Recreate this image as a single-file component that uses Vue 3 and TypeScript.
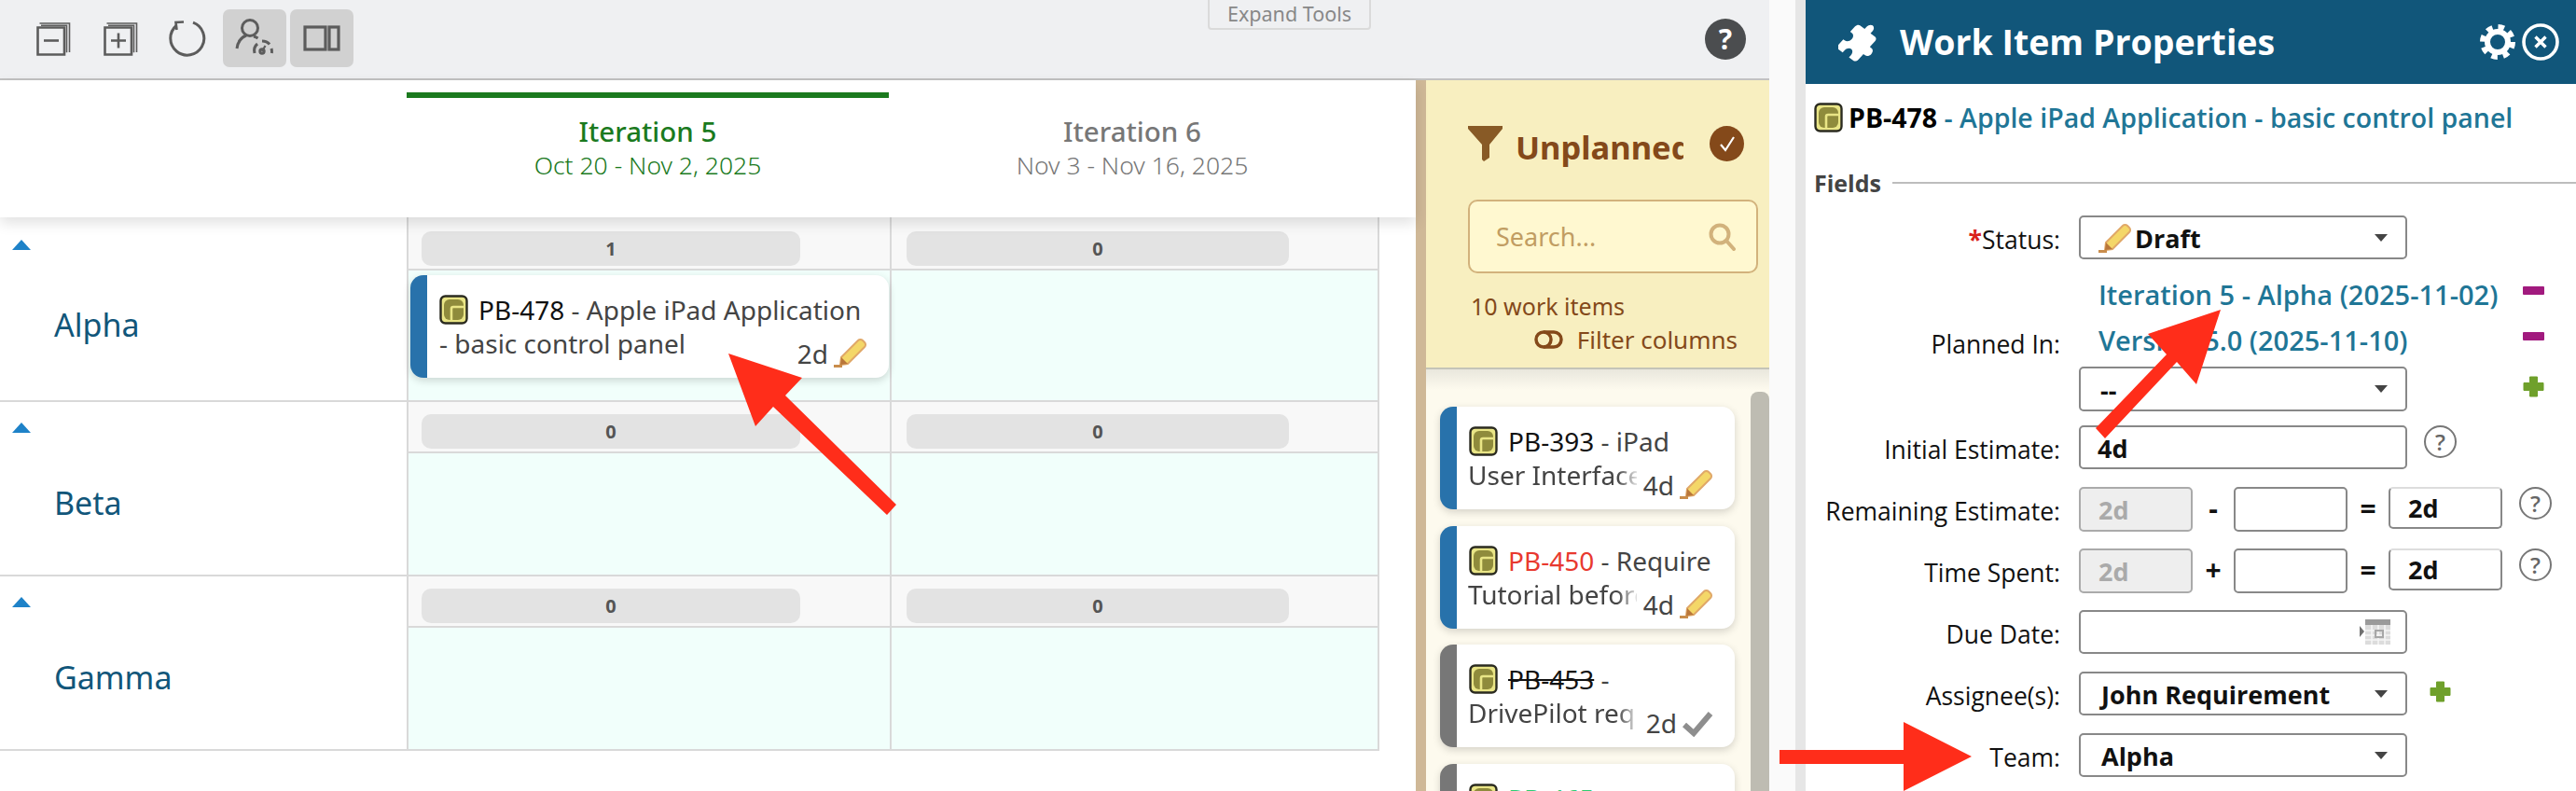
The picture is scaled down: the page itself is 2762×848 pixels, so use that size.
<script setup lang="ts">
interface Row { name: string; first?: boolean; counts: number[]; }
const rows: Row[] = [
  { name: 'Alpha', first: true, counts: [1, 0] },
  { name: 'Beta', counts: [0, 0] },
  { name: 'Gamma', counts: [0, 0] },
];
interface Item { id: string; tail: string; line2: string; est: string; state: string; idClass?: string; stripe: string; }
const items: Item[] = [
  { id: 'PB-393', tail: ' - iPad', line2: 'User Interface', est: '4d', state: 'draft', stripe: 'blue' },
  { id: 'PB-450', tail: ' - Require', line2: 'Tutorial before', est: '4d', state: 'draft', idClass: 'red', stripe: 'blue' },
  { id: 'PB-453', tail: ' -', line2: 'DrivePilot requ', est: '2d', state: 'done', idClass: 'strike', stripe: 'grey' },
  { id: 'PB-465', tail: ' -', line2: '', est: '', state: '', idClass: 'green', stripe: 'grey' },
];
</script>

<template>
  <div class="page">
    <svg class="defs" width="0" height="0" aria-hidden="true">
      <symbol id="wi" viewBox="0 0 31 32">
        <rect x="1.5" y="1.5" width="28" height="29" rx="5" fill="#e9e586" stroke="#2b2b20" stroke-width="2.4" />
        <rect x="5" y="5" width="21" height="22" rx="6" fill="#8f8b3c" />
        <path d="M26 13H15a2 2 0 0 0-2 2v12" fill="none" stroke="#e9e586" stroke-width="2.6" />
      </symbol>
      <symbol id="pencil" viewBox="0 0 37 32">
        <path d="M9 21 27 3a3.5 3.5 0 0 1 5 0l2 2a3.5 3.5 0 0 1 0 5L16 28l-8 1z" fill="#f4d768" stroke="#e0a868" stroke-width="2" />
        <path d="M9 21l7 7-8 1z" fill="#b9763a" />
        <path d="M1 30.5h9" stroke="#c98d4c" stroke-width="3" />
      </symbol>
      <symbol id="minusbox" viewBox="0 0 37 37">
        <path d="M1.5 6.5h28.5v29H1.5z" fill="none" stroke="#5c5c5c" stroke-width="2.6" />
        <path d="M3.5 2h32v31M5 4.3h27.500v29" fill="none" stroke="#5c5c5c" stroke-width="1.600" />
      </symbol>
    </svg>

    <section class="main">
      <header class="toolbar">
        <button class="tool">
          <svg width="37" height="37"><use href="#minusbox" /><path d="M8 20.500h16" stroke="#5c5c5c" stroke-width="2.600" /></svg>
        </button>
        <button class="tool">
          <svg width="37" height="37"><use href="#minusbox" /><path d="M8 20.500h16M16 12.500v16" stroke="#5c5c5c" stroke-width="2.600" /></svg>
        </button>
        <button class="tool">
          <svg width="40" height="40" viewBox="0 0 40 40" fill="none" stroke="#5c5c5c" stroke-width="3">
            <path d="M26 3.200A18 18 0 1 1 8 6.500" />
            <path d="M16 2.500 7.500 3l1 8" stroke-width="2.600" />
          </svg>
        </button>
        <button class="tool on">
          <svg width="46" height="44" viewBox="0 0 46 44" fill="none" stroke="#5c5c5c" stroke-width="3">
            <circle cx="18" cy="11" r="8.500" />
            <path d="M4 33c1-8 5-12 10-14M22 20c2 .6 3 1 4.500 2" />
            <path d="M23 38c-1-4 .5-8 3-10M31 25c3 0 6 1 8 3.500M41 33c.6 2 .6 3.500.4 5" />
            <circle cx="31" cy="36" r="2.200" />
            <path d="M31 36l3.500-6" stroke-width="2.200" />
          </svg>
        </button>
        <button class="tool on">
          <svg width="40" height="28" viewBox="0 0 40 28" fill="none" stroke="#5c5c5c" stroke-width="3.200">
            <rect x="2" y="2" width="22" height="24" />
            <rect x="28" y="2" width="10" height="24" />
          </svg>
        </button>
        <div class="expand">Expand Tools</div>
        <div class="helpdark">?</div>
      </header>

      <div class="workspace">
        <div class="board">
          <div class="boardhead">
            <div class="itercol active">
              <div class="itername">Iteration 5</div>
              <div class="iterdate">Oct 20 - Nov 2, 2025</div>
            </div>
            <div class="itercol">
              <div class="itername">Iteration 6</div>
              <div class="iterdate">Nov 3 - Nov 16, 2025</div>
            </div>
          </div>
          <div class="lane" v-for="r in rows" :key="r.name" :class="{ first: r.first }">
            <div class="lanehead">
              <span class="tri"></span>
              <div class="lanename">{{ r.name }}</div>
            </div>
            <div class="cell" v-for="(c, i) in r.counts" :key="i" :class="{ last: i === 1 }">
              <div class="strip"><div class="pill" :class="{ last: i === 1 }">{{ c }}</div></div>
              <div class="cellbody">
                <div class="card wide" v-if="r.first && i === 0">
                  <div class="cline">
                    <svg class="wi" width="31" height="32"><use href="#wi" /></svg><span class="id">PB-478</span><span> - Apple iPad Application</span>
                  </div>
                  <div class="cline">- basic control panel</div>
                  <div class="est">2d<svg width="37" height="32"><use href="#pencil" /></svg></div>
                </div>
              </div>
            </div>
          </div>
        </div>

        <aside class="unplanned">
          <div class="uphead">
            <div class="uptitle">
              <svg width="37" height="38" viewBox="0 0 37 38"><path d="M0 0h37v3L23 20v14l-6 4-2-2V20L0 3z" fill="#885a26" /></svg>
              <div class="uptext">Unplanned</div>
              <div class="upcheck">
                <svg width="20" height="20" viewBox="0 0 20 20" fill="none" stroke="#fff" stroke-width="2.200"><path d="M3 11l5 6 9-14" /></svg>
              </div>
            </div>
            <div class="search">
              <span>Search...</span>
              <svg width="29" height="30" viewBox="0 0 29 30" fill="none" stroke="#d2b27c" stroke-width="4"><circle cx="12" cy="12" r="9.500" /><path d="M19 19l8 9" stroke-linecap="round" /></svg>
            </div>
            <div class="count">10 work items</div>
            <div class="filter">
              <svg width="31" height="20" viewBox="0 0 31 20" fill="none" stroke="#84491a" stroke-width="3.500"><circle cx="10" cy="10" r="8" /><path d="M10 2h11a8 8 0 0 1 0 16H10" /></svg>
              <span>Filter columns</span>
            </div>
          </div>
          <div class="uplist">
            <div class="upcards">
              <div class="card narrow" v-for="it in items" :key="it.id" :class="it.stripe">
                <div class="cline">
                  <svg class="wi" width="31" height="32"><use href="#wi" /></svg><span class="id" :class="it.idClass">{{ it.id }}</span><span>{{ it.tail }}</span>
                </div>
                <div class="cline faded">{{ it.line2 }}</div>
                <div class="est" v-if="it.est">
                  {{ it.est }}
                  <svg v-if="it.state === 'draft'" width="37" height="32"><use href="#pencil" /></svg>
                  <svg v-else width="34" height="28" viewBox="0 0 34 28" fill="none" stroke="#8e8e8e" stroke-width="6"><path d="M3 15l10 9L31 3" /></svg>
                </div>
              </div>
            </div>
            <div class="scroll"></div>
          </div>
        </aside>
      </div>
    </section>

    <div class="gap"></div>

    <section class="props">
      <header class="prophead">
        <svg width="50" height="44" viewBox="0 0 50 44" fill="#fff">
          <path transform="translate(25 22) rotate(-40) scale(2.050 1.550) rotate(80) translate(-12.500 -11.500)" d="M20.500 11H19V7c0-1.100-.900-2-2-2h-4V3.500C13 2.120 11.880 1 10.500 1S8 2.120 8 3.500V5H4c-1.100 0-1.990.900-1.990 2v3.800H3.500c1.490 0 2.700 1.210 2.700 2.700s-1.210 2.700-2.700 2.700H2V20c0 1.100.900 2 2 2h3.800v-1.500c0-1.490 1.210-2.700 2.700-2.700 1.490 0 2.700 1.210 2.700 2.700V22H17c1.100 0 2-.900 2-2v-4h1.500c1.380 0 2.500-1.120 2.500-2.500S21.880 11 20.500 11z" />
        </svg>
        <h1>Work Item Properties</h1>
        <div class="headicons">
          <svg width="38" height="40" viewBox="0 0 38 40" fill="none" stroke="#fff">
            <circle cx="19" cy="20" r="11" stroke-width="6" />
            <circle cx="19" cy="20" r="16" stroke-width="6" stroke-dasharray="6.500 6.070" />
          </svg>
          <svg width="40" height="40" viewBox="0 0 40 40" fill="none" stroke="#fff">
            <circle cx="20" cy="20" r="18" stroke-width="3.600" />
            <path d="M14.500 14.500l11 11M25.500 14.500l-11 11" stroke-width="3.400" />
          </svg>
        </div>
      </header>

      <div class="propbody">
        <div class="proptitle">
          <svg width="31" height="32"><use href="#wi" /></svg>
          <b>PB-478</b><span class="linkb">&nbsp;- Apple iPad Application - basic control panel</span>
        </div>
        <div class="legend"><b>Fields</b><span class="legendline"></span></div>

        <div class="frow">
          <label class="flabel"><em>*</em>Status:</label>
          <div class="box sel">
            <svg width="37" height="32"><use href="#pencil" /></svg><b>Draft</b><i class="caret"></i>
          </div>
        </div>

        <div class="frow planned">
          <label class="flabel">Planned In:</label>
          <div class="plannedcol">
            <div class="plink"><a>Iteration 5 - Alpha (2025-11-02)</a><span class="minus"></span></div>
            <div class="plink"><a>Version 5.0 (2025-11-10)</a><span class="minus"></span></div>
            <div class="selrow">
              <div class="box sel"><b>--</b><i class="caret"></i></div>
              <svg class="plusa" width="23" height="23" viewBox="0 0 23 23"><path d="M7.500 1h8v6.500H22v8h-6.500V22h-8v-6.500H1v-8h6.500z" fill="#6fa02b" stroke="#6fa02b" stroke-linejoin="round" /></svg>
            </div>
          </div>
        </div>

        <div class="frow t15">
          <label class="flabel">Initial Estimate:</label>
          <div class="box sel text"><b>4d</b></div>
          <span class="q q1">?</span>
        </div>

        <div class="frow tall">
          <label class="flabel">Remaining Estimate:</label>
          <div class="box num dis">2d</div>
          <span class="op">-</span>
          <div class="box num"></div>
          <span class="op eq">=</span>
          <div class="box num res"><b>2d</b></div>
          <span class="q q2">?</span>
        </div>

        <div class="frow tall t18">
          <label class="flabel">Time Spent:</label>
          <div class="box num dis">2d</div>
          <span class="op">+</span>
          <div class="box num"></div>
          <span class="op eq">=</span>
          <div class="box num res"><b>2d</b></div>
          <span class="q q2">?</span>
        </div>

        <div class="frow t18">
          <label class="flabel">Due Date:</label>
          <div class="box sel cal">
            <svg width="34" height="27" viewBox="0 0 34 27">
              <path d="M0 7l5 6-5 6z" fill="#707070" />
              <rect x="6" y="0" width="27" height="6" fill="#9a9a9a" />
              <rect x="6" y="6" width="27" height="21" fill="#dcdcdc" />
              <path d="M6 12h27M6 17h27M6 22h27M13 6v21M20 6v21M27 6v21" stroke="#f5f5f5" stroke-width="1.600" />
              <rect x="17" y="12" width="8" height="7" fill="none" stroke="#a8a8a8" stroke-width="2" />
            </svg>
          </div>
        </div>

        <div class="frow">
          <label class="flabel">Assignee(s):</label>
          <div class="box sel pl"><b>John Requirement</b><i class="caret"></i></div>
          <svg class="plusb" width="23" height="23" viewBox="0 0 23 23"><path d="M7.500 1h8v6.500H22v8h-6.500V22h-8v-6.500H1v-8h6.500z" fill="#6fa02b" stroke="#6fa02b" stroke-linejoin="round" /></svg>
        </div>

        <div class="frow">
          <label class="flabel">Team:</label>
          <div class="box sel pl"><b>Alpha</b><i class="caret"></i></div>
        </div>
      </div>
    </section>

    <svg class="arrows" width="2762" height="848" viewBox="0 0 2762 848" fill="#ff2d1a">
      <path d="M781 379l79 26-18 19 119 117-10 11-122-116-19 21z" />
      <path d="M2381 332l-78 26 20 22-76 79 10 11 77-82 21 24z" />
      <path d="M1908 804h133v-30l73 37-73 37v-29h-133z" />
    </svg>
  </div>
</template>

<style>
html, body { margin: 0; background: #fff; }
</style>

<style scoped>
.page {
  position: relative;
  width: 2762px;
  height: 848px;
  overflow: hidden;
  display: flex;
  background: #fff;
  font-family: "Noto Sans", sans-serif;
  color: #444;
}
.defs { position: absolute; }
.arrows { position: absolute; left: 0; top: 0; pointer-events: none; }

.main { width: 1897px; display: flex; flex-direction: column; flex: none; }
.gap { width: 28px; background: #fafafa; border-right: 11px solid #e6e6e6; flex: none; }

.toolbar {
  position: relative;
  height: 84px;
  flex: none;
  box-sizing: content-box;
  background: #eff0f2;
  border-bottom: 2px solid #c2c2c2;
  display: flex;
  align-items: flex-start;
  padding-left: 23px;
  gap: 4px;
}
.tool {
  width: 68px;
  height: 62px;
  margin-top: 10px;
  padding: 0;
  border: 0;
  border-radius: 7px;
  background: transparent;
  display: flex;
  align-items: center;
  justify-content: center;
}
.tool.on { background: #d1d1d1; }
.expand {
  position: absolute;
  left: 1295px;
  top: -2px;
  width: 175px;
  height: 34px;
  box-sizing: border-box;
  border: 2px solid #dadada;
  border-radius: 0 0 4px 4px;
  color: #888;
  font-size: 21.5px;
  line-height: 30px;
  text-align: center;
}
.helpdark {
  width: 44px;
  height: 44px;
  margin: 20px 25px 0 auto;
  border-radius: 50%;
  background: #4b4d4f;
  color: #fff;
  font-size: 30px;
  font-weight: 700;
  line-height: 44px;
  text-align: center;
}

.workspace { flex: 1; display: flex; min-height: 0; }
.board { width: 1518px; flex: none; border-right: 11px solid #cfb897; }
.boardhead {
  position: relative;
  z-index: 2;
  height: 147px;
  display: grid;
  grid-template-columns: 517px 522px;
  padding-left: 436px;
  background: #fff;
  box-shadow: 0 6px 14px rgba(0, 0, 0, .12);
}
.itercol { padding-top: 35px; text-align: center; color: #777; }
.itercol.active { color: #1b7a1e; border-top: 6px solid #1b7a1e; margin-top: 13px; padding-top: 16px; }
.itername { font-size: 29.5px; font-weight: 500; line-height: 40px; }
.iterdate { font-size: 26.5px; font-weight: 300; line-height: 32px; }

.lane {
  width: 1479px;
  height: 187px;
  box-sizing: border-box;
  display: grid;
  grid-template-columns: 436px 518px 525px;
  border-bottom: 2px solid #d9d9d9;
}
.lane.first { height: 198px; }
.lanehead { padding-top: 22px; }
.first .lanehead { padding-top: 24px; }
.tri {
  display: block;
  width: 0;
  margin-left: 13px;
  border-left: 10px solid transparent;
  border-right: 10px solid transparent;
  border-bottom: 11px solid #1e82c8;
}
.lanename { margin: 53px 0 0 58px; font-size: 34px; line-height: 44px; color: #11567a; }
.first .lanename { margin-top: 58px; }
.cell { border-left: 2px solid #d9d9d9; display: flex; flex-direction: column; }
.cell.last { border-right: 2px solid #d9d9d9; }
.strip {
  height: 53px;
  box-sizing: content-box;
  background: #f8f8f8;
  border-bottom: 2px solid #d9d9d9;
  padding-left: 14px;
}
.first .strip { height: 55px; }
.pill {
  width: 406px;
  height: 37px;
  margin-top: 13px;
  border-radius: 10px;
  background: #e3e3e3;
  color: #555;
  font-size: 20px;
  font-weight: 700;
  line-height: 37px;
  text-align: center;
}
.pill.last { width: 410px; margin-left: 2px; }
.first .pill { margin-top: 15px; }
.cellbody { flex: 1; background: #f1fffb; padding: 5px 1px 0 2px; }

.card {
  position: relative;
  box-sizing: border-box;
  height: 110px;
  padding: 19px 0 0 13px;
  background: #fff;
  border-left: 18px solid #2872ab;
  border-radius: 14px;
  box-shadow: 0 3px 8px rgba(0, 0, 0, .16);
  font-size: 28px;
  color: #444;
}
.card.grey { border-left-color: #777; }
.cline { height: 36px; line-height: 36px; display: flex; align-items: center; white-space: pre; }
.wi { margin-right: 11px; flex: none; }
.id { color: #111; }
.id.red { color: #e8392f; }
.id.green { color: #2ecc71; }
.id.strike { text-decoration: line-through; }
.est {
  position: absolute;
  right: 23px;
  bottom: 11px;
  display: flex;
  align-items: flex-end;
  gap: 5px;
  line-height: 30px;
}
.narrow { margin-bottom: 17.5px; }
.faded {
  width: 181px;
  overflow: hidden;
  -webkit-mask-image: linear-gradient(90deg, #000 160px, rgba(0,0,0,.15) 181px);
  mask-image: linear-gradient(90deg, #000 160px, rgba(0,0,0,.15) 181px);
}
.narrow .cline:nth-child(2) { margin-left: -1px; }

.unplanned { flex: 1; min-width: 0; display: flex; flex-direction: column; }
.uphead {
  height: 310px;
  flex: none;
  box-sizing: border-box;
  background: #f8efc0;
  border-bottom: 2px solid #c4c4b8;
  padding: 49px 0 0 45px;
  color: #84491a;
}
.uptitle { display: flex; align-items: center; height: 38px; }
.uptext {
  width: 180px;
  margin-left: 14px;
  overflow: hidden;
  white-space: nowrap;
  font-size: 34.5px;
  font-weight: 700;
  padding-top: 6px;
}
.upcheck {
  width: 37px;
  height: 38px;
  margin-left: 28px;
  border-radius: 50%;
  background: #84491a;
  display: flex;
  align-items: center;
  justify-content: center;
}
.search {
  width: 311px;
  height: 79px;
  margin-top: 41px;
  box-sizing: border-box;
  border: 2px solid #d2b27c;
  border-radius: 10px;
  background: #fff8d0;
  display: flex;
  align-items: center;
  justify-content: space-between;
  padding: 0 22px 0 28px;
  color: #c19d62;
  font-size: 27px;
}
.count { margin: 17px 0 0 3px; font-size: 25px; line-height: 36px; }
.filter {
  display: flex;
  align-items: center;
  justify-content: flex-end;
  gap: 15px;
  padding-right: 34px;
  font-size: 26px;
  line-height: 36px;
}
.uplist {
  flex: 1;
  min-height: 0;
  display: flex;
  background: linear-gradient(#e9e7dd, #fdfaee 22px);
  overflow: hidden;
}
.upcards { width: 316px; margin-left: 15px; padding-top: 40px; }
.scroll {
  width: 20px;
  margin: 24px 0 0 17px;
  border-radius: 8px 8px 0 0;
  background: #bebcb2;
}

.props { flex: 1; min-width: 0; display: flex; flex-direction: column; color: #111; font-family: "Open Sans", sans-serif; }
.prophead {
  height: 90px;
  flex: none;
  background: #11567a;
  display: flex;
  align-items: center;
  padding: 0 18px 0 35px;
  color: #fff;
}
.prophead h1 { margin: 0 0 0 16px; font-size: 37.5px; font-weight: 700; line-height: 1; }
.headicons { margin-left: auto; display: flex; gap: 7px; }
.propbody { padding: 20px 0 0 9px; font-size: 27px; }
.proptitle { display: flex; align-items: center; height: 32px; font-size: 28.5px; font-weight: 600; white-space: nowrap; }
.proptitle b { margin-left: 6px; color: #000; font-weight: 700; }
.linkb { color: #1f7696; }
.legend { display: flex; align-items: center; height: 40px; margin-top: 34px; }
.legend b { color: #444; font-weight: 700; font-size: 25px; }
.legendline { flex: 1; height: 2px; margin: 0 0 0 12px; background: #bdbdbd; }

.frow { display: flex; align-items: flex-start; margin-top: 19px; height: 47px; }
.legend + .frow { margin-top: 15px; }
.frow.tall { height: 48px; }
.frow.t15 { margin-top: 15px; }
.frow.t18 { margin-top: 18px; }
.frow.planned { height: 146px; margin-top: 17px; align-items: center; }
.flabel { width: 284px; padding: 3px 20px 0 0; flex: none; box-sizing: border-box; text-align: right; line-height: 47px; font-size: 26.5px; white-space: nowrap; }
.flabel em { color: #d9211c; font-style: normal; font-weight: 700; }
.box {
  box-sizing: border-box;
  border: 2px solid #888;
  border-radius: 5px;
  background: #fff;
  height: 100%;
  display: flex;
  align-items: center;
}
.box b { font-weight: 700; }
.sel { position: relative; width: 352px; height: 47px; padding-left: 18px; flex: none; }
.sel b { margin: 2px 0 0 3px; }
.sel.pl { padding-left: 19px; }
.sel.text b { margin-left: 0; }
.sel.cal { justify-content: flex-end; padding-right: 15px; }
.caret {
  position: absolute;
  right: 19px;
  top: 50%;
  margin-top: -4px;
  border-left: 7px solid transparent;
  border-right: 7px solid transparent;
  border-top: 8px solid #444;
}
.plannedcol { display: flex; flex-direction: column; gap: 7px; height: 146px; }
.plink { position: relative; display: flex; height: 42px; width: 499px; padding-left: 21px; box-sizing: border-box; }
.plink a { color: #1f7696; font-weight: 600; font-size: 29px; line-height: 42px; white-space: nowrap; }
.minus { width: 23px; height: 9px; margin: 12px 0 0 auto; background: #a11a7e; border-radius: 1px; }
.selrow { display: flex; height: 48px; }
.selrow .sel { height: 48px; }
.plusa { margin: 10px 0 0 124px; }
.plusb { margin: 10px 0 0 24px; }
.num { width: 122px; padding-left: 19px; flex: none; }
.num.dis { background: #eee; color: #aaa; font-weight: 700; border-color: #aaa; }
.num.res { height: 45px; border-top-color: #ddd; }
.op { width: 44px; flex: none; text-align: center; font-weight: 700; font-size: 30px; line-height: 46px; }
.op.eq { width: 44px; }
.q {
  width: 35px;
  height: 35px;
  flex: none;
  box-sizing: border-box;
  border: 2px solid #777;
  border-radius: 50%;
  color: #666;
  font-size: 24px;
  font-weight: 600;
  line-height: 31px;
  text-align: center;
}
.q1 { margin-left: 18px; }
.q2 { margin-left: 18px; }
</style>
